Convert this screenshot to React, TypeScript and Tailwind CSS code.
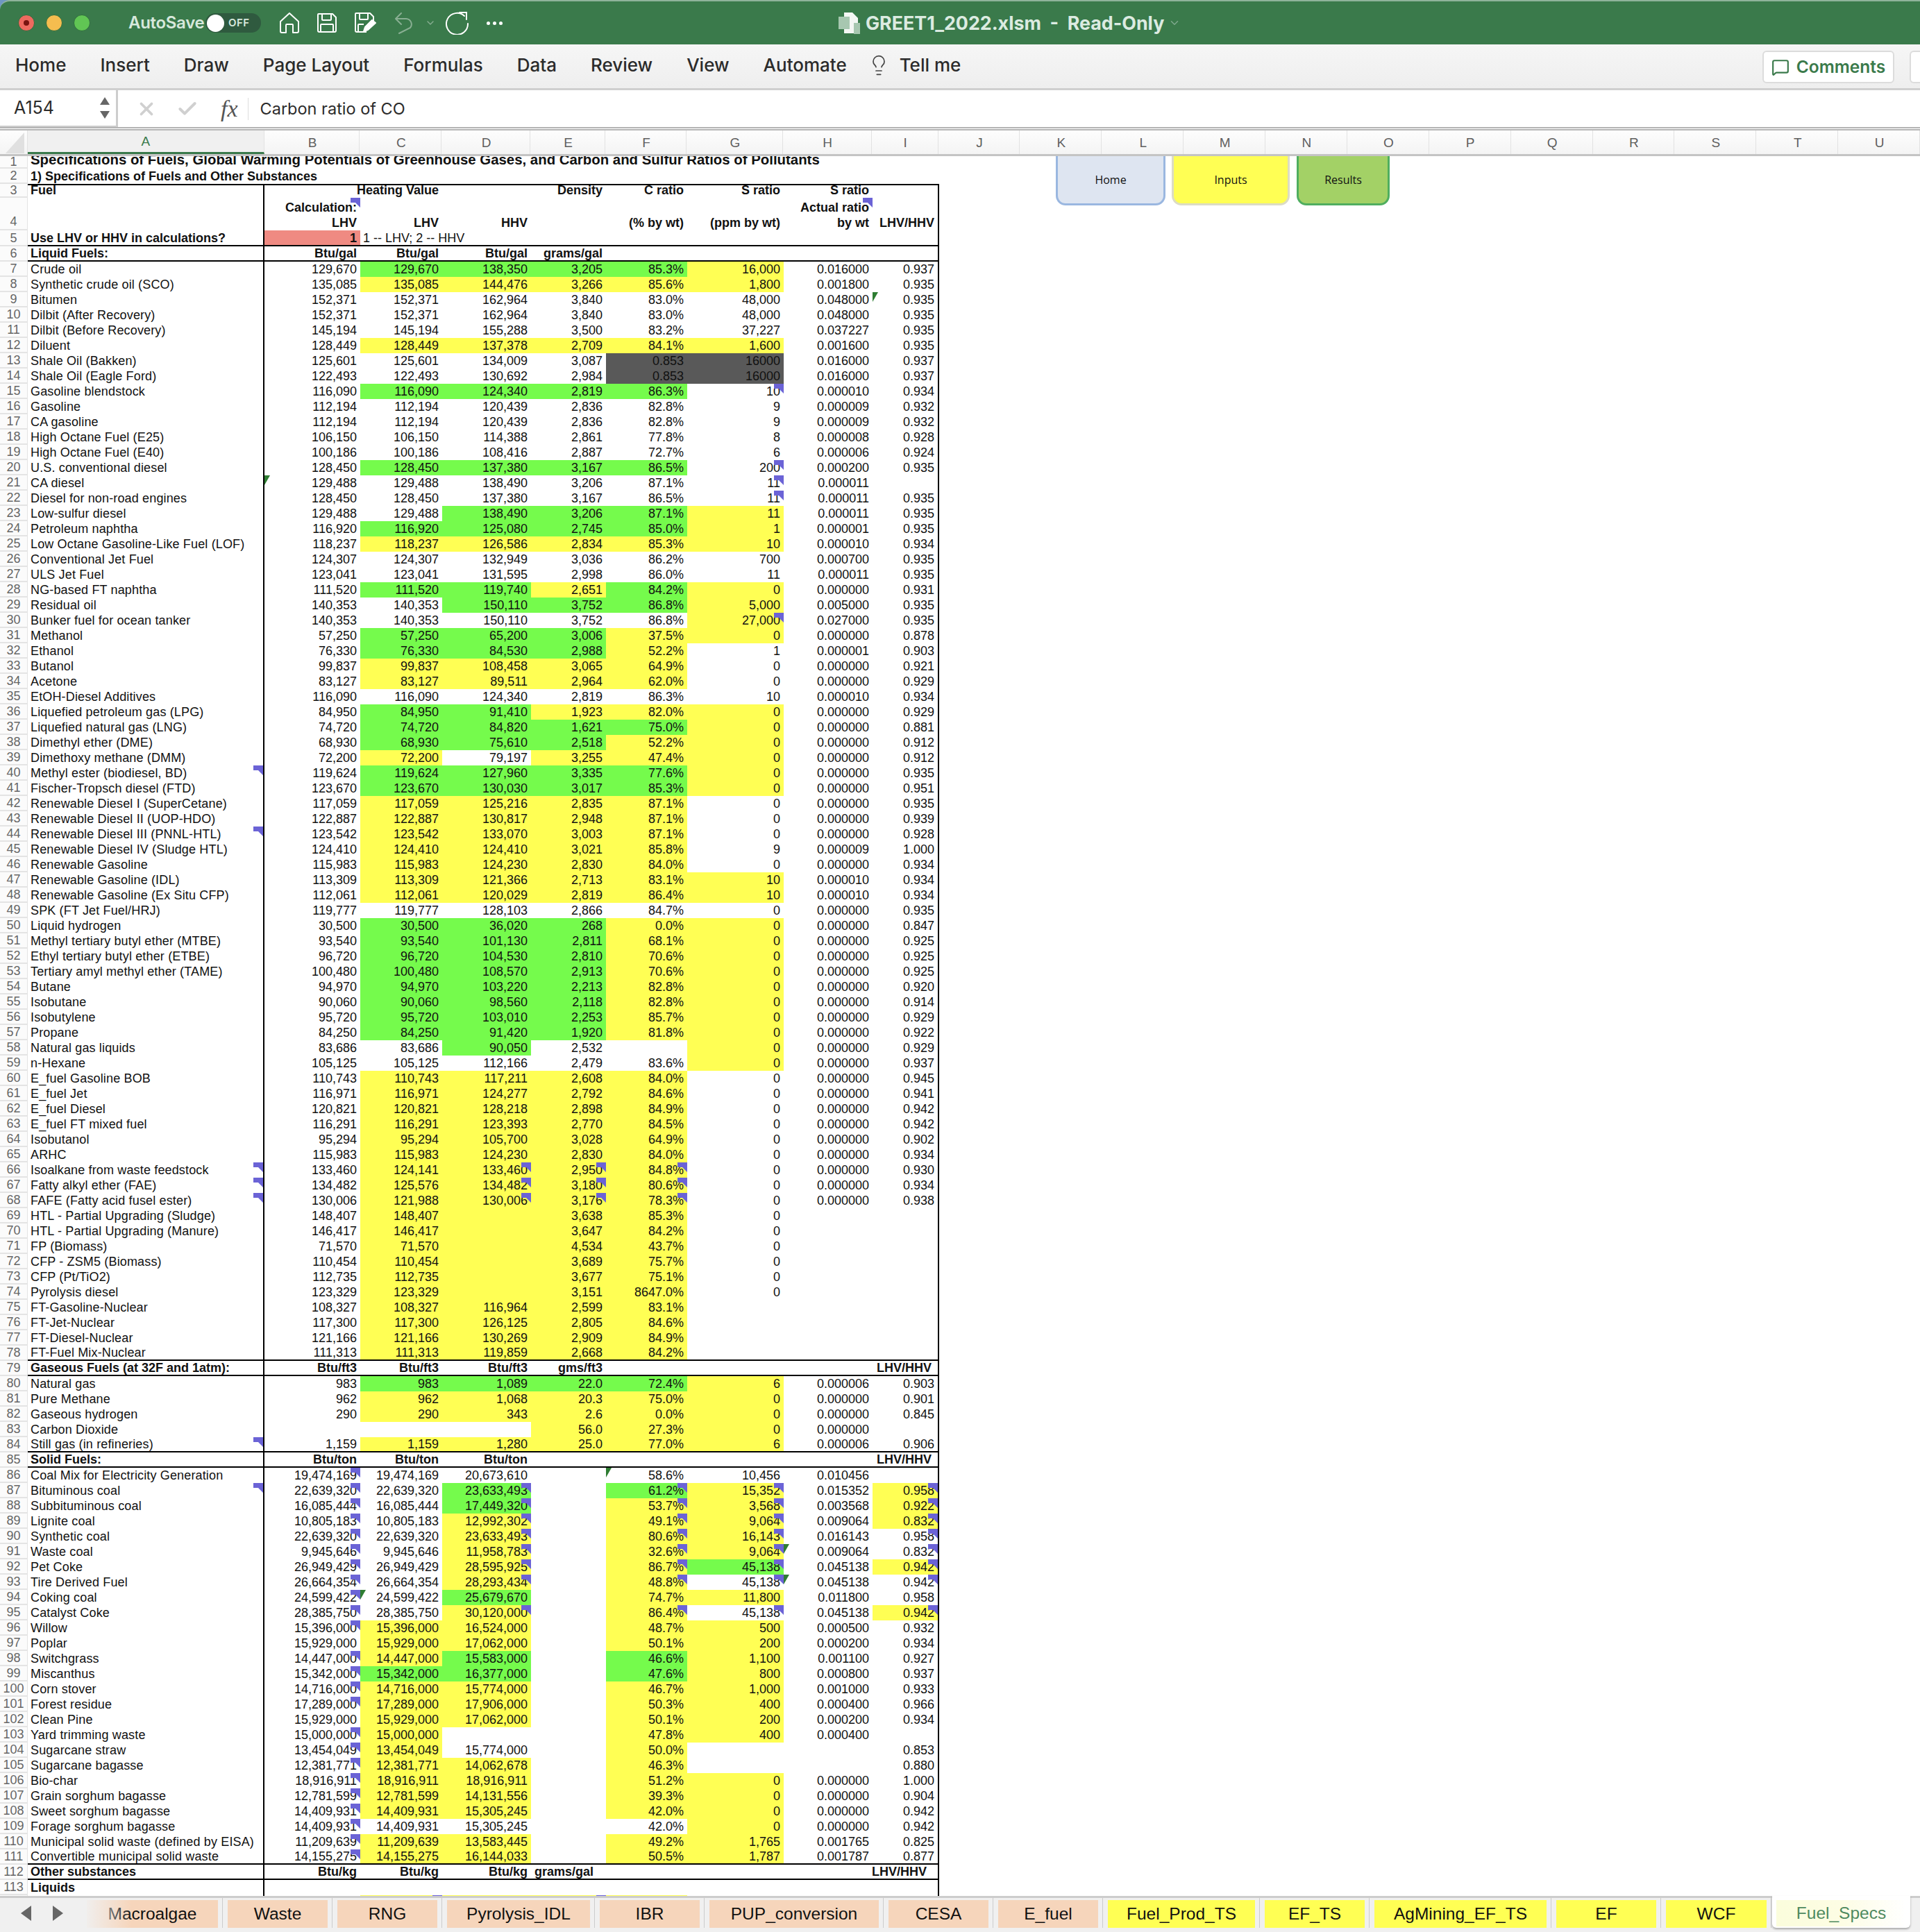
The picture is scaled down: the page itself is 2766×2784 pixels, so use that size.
import { Check, ChevronDown, Lightbulb, MessageSquare, X } from "lucide-react";

const GRID =
  "grid grid-rows-[100%] grid-cols-[40px_341px_138px_118px_128px_108px_117px_139px_128px_96px]";

// label, B C D E F G H I ("_" = empty), fills for C D E F G I, purple comment marks, green marks
type Row = [string, string, string?, string?, string?];

const rows: Row[] = [
  ["Crude oil", "129,670 129,670 138,350 3,205 85.3% 16,000 0.016000 0.937", "ggggy."],
  ["Synthetic crude oil (SCO)", "135,085 135,085 144,476 3,266 85.6% 1,800 0.001800 0.935", "yyyyy."],
  ["Bitumen", "152,371 152,371 162,964 3,840 83.0% 48,000 0.048000 0.935", "", "", "I"],
  ["Dilbit (After Recovery)", "152,371 152,371 162,964 3,840 83.0% 48,000 0.048000 0.935"],
  ["Dilbit (Before Recovery)", "145,194 145,194 155,288 3,500 83.2% 37,227 0.037227 0.935"],
  ["Diluent", "128,449 128,449 137,378 2,709 84.1% 1,600 0.001600 0.935", "yyyyy."],
  ["Shale Oil (Bakken)", "125,601 125,601 134,009 3,087 0.853 16000 0.016000 0.937", "...dd."],
  ["Shale Oil (Eagle Ford)", "122,493 122,493 130,692 2,984 0.853 16000 0.016000 0.937", "...dd."],
  ["Gasoline blendstock", "116,090 116,090 124,340 2,819 86.3% 10 0.000010 0.934", "gggg..", "G"],
  ["Gasoline", "112,194 112,194 120,439 2,836 82.8% 9 0.000009 0.932"],
  ["CA gasoline", "112,194 112,194 120,439 2,836 82.8% 9 0.000009 0.932"],
  ["High Octane Fuel (E25)", "106,150 106,150 114,388 2,861 77.8% 8 0.000008 0.928"],
  ["High Octane Fuel (E40)", "100,186 100,186 108,416 2,887 72.7% 6 0.000006 0.924"],
  ["U.S. conventional diesel", "128,450 128,450 137,380 3,167 86.5% 200 0.000200 0.935", "gggg..", "G"],
  ["CA diesel", "129,488 129,488 138,490 3,206 87.1% 11 0.000011 _", "", "G", "B"],
  ["Diesel for non-road engines", "128,450 128,450 137,380 3,167 86.5% 11 0.000011 0.935", "", "G"],
  ["Low-sulfur diesel", "129,488 129,488 138,490 3,206 87.1% 11 0.000011 0.935", ".gggy."],
  ["Petroleum naphtha", "116,920 116,920 125,080 2,745 85.0% 1 0.000001 0.935", "ggggy."],
  ["Low Octane Gasoline-Like Fuel (LOF)", "118,237 118,237 126,586 2,834 85.3% 10 0.000010 0.934", "yyyyy."],
  ["Conventional Jet Fuel", "124,307 124,307 132,949 3,036 86.2% 700 0.000700 0.935"],
  ["ULS Jet Fuel", "123,041 123,041 131,595 2,998 86.0% 11 0.000011 0.935"],
  ["NG-based FT naphtha", "111,520 111,520 119,740 2,651 84.2% 0 0.000000 0.931", "ggygy."],
  ["Residual oil", "140,353 140,353 150,110 3,752 86.8% 5,000 0.005000 0.935", ".gggy."],
  ["Bunker fuel for ocean tanker", "140,353 140,353 150,110 3,752 86.8% 27,000 0.027000 0.935", "....y.", "G"],
  ["Methanol", "57,250 57,250 65,200 3,006 37.5% 0 0.000000 0.878", "gggyy."],
  ["Ethanol", "76,330 76,330 84,530 2,988 52.2% 1 0.000001 0.903", "gggy.."],
  ["Butanol", "99,837 99,837 108,458 3,065 64.9% 0 0.000000 0.921", "yyyy.."],
  ["Acetone", "83,127 83,127 89,511 2,964 62.0% 0 0.000000 0.929", "yyyy.."],
  ["EtOH-Diesel Additives", "116,090 116,090 124,340 2,819 86.3% 10 0.000010 0.934"],
  ["Liquefied petroleum gas (LPG)", "84,950 84,950 91,410 1,923 82.0% 0 0.000000 0.929", "ggyyy."],
  ["Liquefied natural gas (LNG)", "74,720 74,720 84,820 1,621 75.0% 0 0.000000 0.881", "ggggy."],
  ["Dimethyl ether (DME)", "68,930 68,930 75,610 2,518 52.2% 0 0.000000 0.912", "gggyy."],
  ["Dimethoxy methane (DMM)", "72,200 72,200 79,197 3,255 47.4% 0 0.000000 0.912", "y.yyy."],
  ["Methyl ester (biodiesel, BD)", "119,624 119,624 127,960 3,335 77.6% 0 0.000000 0.935", "ggggy.", "A"],
  ["Fischer-Tropsch diesel (FTD)", "123,670 123,670 130,030 3,017 85.3% 0 0.000000 0.951", "ggggy."],
  ["Renewable Diesel I (SuperCetane)", "117,059 117,059 125,216 2,835 87.1% 0 0.000000 0.935", "yyyy.."],
  ["Renewable Diesel II (UOP-HDO)", "122,887 122,887 130,817 2,948 87.1% 0 0.000000 0.939", "yyyy.."],
  ["Renewable Diesel III (PNNL-HTL)", "123,542 123,542 133,070 3,003 87.1% 0 0.000000 0.928", "yyyy..", "A"],
  ["Renewable Diesel IV (Sludge HTL)", "124,410 124,410 124,410 3,021 85.8% 9 0.000009 1.000", "yyyy.."],
  ["Renewable Gasoline", "115,983 115,983 124,230 2,830 84.0% 0 0.000000 0.934", "yyyy.."],
  ["Renewable Gasoline (IDL)", "113,309 113,309 121,366 2,713 83.1% 10 0.000010 0.934", "yyyyy."],
  ["Renewable Gasoline (Ex Situ CFP)", "112,061 112,061 120,029 2,819 86.4% 10 0.000010 0.934", "yyyyy."],
  ["SPK (FT Jet Fuel/HRJ)", "119,777 119,777 128,103 2,866 84.7% 0 0.000000 0.935"],
  ["Liquid hydrogen", "30,500 30,500 36,020 268 0.0% 0 0.000000 0.847", "gggyy."],
  ["Methyl tertiary butyl ether (MTBE)", "93,540 93,540 101,130 2,811 68.1% 0 0.000000 0.925", "gggyy."],
  ["Ethyl tertiary butyl ether (ETBE)", "96,720 96,720 104,530 2,810 70.6% 0 0.000000 0.925", "gggyy."],
  ["Tertiary amyl methyl ether (TAME)", "100,480 100,480 108,570 2,913 70.6% 0 0.000000 0.925", "gggyy."],
  ["Butane", "94,970 94,970 103,220 2,213 82.8% 0 0.000000 0.920", "gggyy."],
  ["Isobutane", "90,060 90,060 98,560 2,118 82.8% 0 0.000000 0.914", "gggyy."],
  ["Isobutylene", "95,720 95,720 103,010 2,253 85.7% 0 0.000000 0.929", "gggyy."],
  ["Propane", "84,250 84,250 91,420 1,920 81.8% 0 0.000000 0.922", "gggyy."],
  ["Natural gas liquids", "83,686 83,686 90,050 2,532 _ 0 0.000000 0.929", ".g..y."],
  ["n-Hexane", "105,125 105,125 112,166 2,479 83.6% 0 0.000000 0.937", "....y."],
  ["E_fuel Gasoline BOB", "110,743 110,743 117,211 2,608 84.0% 0 0.000000 0.945", "yyyy.."],
  ["E_fuel Jet", "116,971 116,971 124,277 2,792 84.6% 0 0.000000 0.941", "yyyy.."],
  ["E_fuel Diesel", "120,821 120,821 128,218 2,898 84.9% 0 0.000000 0.942", "yyyy.."],
  ["E_fuel FT mixed fuel", "116,291 116,291 123,393 2,770 84.5% 0 0.000000 0.942", "yyyy.."],
  ["Isobutanol", "95,294 95,294 105,700 3,028 64.9% 0 0.000000 0.902", "yyyy.."],
  ["ARHC", "115,983 115,983 124,230 2,830 84.0% 0 0.000000 0.934", "yyyy.."],
  ["Isoalkane from waste feedstock", "133,460 124,141 133,460 2,950 84.8% 0 0.000000 0.930", "yyyy..", "ADEF"],
  ["Fatty alkyl ether (FAE)", "134,482 125,576 134,482 3,180 80.6% 0 0.000000 0.934", "yyyy..", "ADEF"],
  ["FAFE (Fatty acid fusel ester)", "130,006 121,988 130,006 3,176 78.3% 0 0.000000 0.938", "yyyy..", "ADEF"],
  ["HTL - Partial Upgrading (Sludge)", "148,407 148,407 _ 3,638 85.3% 0 _ _", "yyyy.."],
  ["HTL - Partial Upgrading (Manure)", "146,417 146,417 _ 3,647 84.2% 0 _ _", "yyyy.."],
  ["FP (Biomass)", "71,570 71,570 _ 4,534 43.7% 0 _ _", "yyyy.."],
  ["CFP - ZSM5 (Biomass)", "110,454 110,454 _ 3,689 75.7% 0 _ _", "yyyy.."],
  ["CFP (Pt/TiO2)", "112,735 112,735 _ 3,677 75.1% 0 _ _", "yyyy.."],
  ["Pyrolysis diesel", "123,329 123,329 _ 3,151 8647.0% 0 _ _", "yyyy.."],
  ["FT-Gasoline-Nuclear", "108,327 108,327 116,964 2,599 83.1% _ _ _", "yyyy.."],
  ["FT-Jet-Nuclear", "117,300 117,300 126,125 2,805 84.6% _ _ _", "yyyy.."],
  ["FT-Diesel-Nuclear", "121,166 121,166 130,269 2,909 84.9% _ _ _", "yyyy.."],
  ["FT-Fuel Mix-Nuclear", "111,313 111,313 119,859 2,668 84.2% _ _ _", "yyyy.."],
  ["Gaseous Fuels (at 32F and 1atm):", "Btu/ft3 Btu/ft3 Btu/ft3 gms/ft3 _ _ _ LHV/HHV", "H"],
  ["Natural gas", "983 983 1,089 22.0 72.4% 6 0.000006 0.903", "ggggy."],
  ["Pure Methane", "962 962 1,068 20.3 75.0% 0 0.000000 0.901", "yyyyy."],
  ["Gaseous hydrogen", "290 290 343 2.6 0.0% 0 0.000000 0.845", "yyyyy."],
  ["Carbon Dioxide", "_ _ _ 56.0 27.3% 0 0.000000 _", "..yyy."],
  ["Still gas (in refineries)", "1,159 1,159 1,280 25.0 77.0% 6 0.000006 0.906", "yyyyy.", "A"],
  ["Solid Fuels:", "Btu/ton Btu/ton Btu/ton _ _ _ _ LHV/HHV", "H"],
  ["Coal Mix for Electricity Generation", "19,474,169 19,474,169 20,673,610 _ 58.6% 10,456 0.010456 _", "", "B", "F"],
  ["Bituminous coal", "22,639,320 22,639,320 23,633,493 _ 61.2% 15,352 0.015352 0.958", ".g.gyy", "ABDFGI"],
  ["Subbituminous coal", "16,085,444 16,085,444 17,449,320 _ 53.7% 3,568 0.003568 0.922", ".g.yyy", "BDFGI"],
  ["Lignite coal", "10,805,183 10,805,183 12,992,302 _ 49.1% 9,064 0.009064 0.832", ".y.yyy", "BDFGI"],
  ["Synthetic coal", "22,639,320 22,639,320 23,633,493 _ 80.6% 16,143 0.016143 0.958", ".y.yy.", "BDFGI"],
  ["Waste coal", "9,945,646 9,945,646 11,958,783 _ 32.6% 9,064 0.009064 0.832", ".y.yy.", "BDFGI", "H"],
  ["Pet Coke", "26,949,429 26,949,429 28,595,925 _ 86.7% 45,138 0.045138 0.942", ".y.ygy", "BDFGI"],
  ["Tire Derived Fuel", "26,664,354 26,664,354 28,293,434 _ 48.8% 45,138 0.045138 0.942", ".y.y..", "BDFGI", "H"],
  ["Coking coal", "24,599,422 24,599,422 25,679,670 _ 74.7% 11,800 0.011800 0.958", ".g.yy.", "B", "C"],
  ["Catalyst Coke", "28,385,750 28,385,750 30,120,000 _ 86.4% 45,138 0.045138 0.942", ".y.y.y", "BDFGI"],
  ["Willow", "15,396,000 15,396,000 16,524,000 _ 48.7% 500 0.000500 0.932", "yy.yy.", "B"],
  ["Poplar", "15,929,000 15,929,000 17,062,000 _ 50.1% 200 0.000200 0.934", "yy.yy."],
  ["Switchgrass", "14,447,000 14,447,000 15,583,000 _ 46.6% 1,100 0.001100 0.927", "yg.gy.", "B"],
  ["Miscanthus", "15,342,000 15,342,000 16,377,000 _ 47.6% 800 0.000800 0.937", "gg.gy.", "B"],
  ["Corn stover", "14,716,000 14,716,000 15,774,000 _ 46.7% 1,000 0.001000 0.933", "yy.yy.", "B"],
  ["Forest residue", "17,289,000 17,289,000 17,906,000 _ 50.3% 400 0.000400 0.966", "yy.yy.", "B"],
  ["Clean Pine", "15,929,000 15,929,000 17,062,000 _ 50.1% 200 0.000200 0.934", "yy.yy."],
  ["Yard trimming waste", "15,000,000 15,000,000 _ _ 47.8% 400 0.000400 _", "y..yy.", "B"],
  ["Sugarcane straw", "13,454,049 13,454,049 15,774,000 _ 50.0% _ _ 0.853", "y..y..", "B"],
  ["Sugarcane bagasse", "12,381,771 12,381,771 14,062,678 _ 46.3% _ _ 0.880", "yy.y..", "B"],
  ["Bio-char", "18,916,911 18,916,911 18,916,911 _ 51.2% 0 0.000000 1.000", "yy.yy.", "B"],
  ["Grain sorghum bagasse", "12,781,599 12,781,599 14,131,556 _ 39.3% 0 0.000000 0.904", "yy.yy.", "B"],
  ["Sweet sorghum bagasse", "14,409,931 14,409,931 15,305,245 _ 42.0% 0 0.000000 0.942", "yy.yy.", "B"],
  ["Forage sorghum bagasse", "14,409,931 14,409,931 15,305,245 _ 42.0% 0 0.000000 0.942", "....y.", "B"],
  ["Municipal solid waste (defined by EISA)", "11,209,639 11,209,639 13,583,445 _ 49.2% 1,765 0.001765 0.825", "yy.yy.", "B"],
  ["Convertible municipal solid waste", "14,155,275 14,155,275 16,144,033 _ 50.5% 1,787 0.001787 0.877", "yy.yy.", "B"],
];

const columns = ["A", "B", "C", "D", "E", "F", "G", "H", "I", "J", "K", "L", "M", "N", "O", "P", "Q", "R", "S", "T", "U"];
const columnWidths: Record<string, string> = {
  A: "w-[341px]",
  B: "w-[138px]",
  C: "w-[118px]",
  D: "w-[128px]",
  E: "w-[108px]",
  F: "w-[117px]",
  G: "w-[139px]",
  H: "w-[128px]",
  I: "w-[96px]",
};

const sheetTabs = [
  { name: "Macroalgae", size: "w-[189px]", color: "bg-[#f6d5bb]" },
  { name: "Waste", size: "w-[144px]", color: "bg-[#f6d5bb]" },
  { name: "RNG", size: "w-[144px]", color: "bg-[#f6d5bb]" },
  { name: "Pyrolysis_IDL", size: "w-[206px]", color: "bg-[#f6d5bb]" },
  { name: "IBR", size: "w-[144px]", color: "bg-[#f6d5bb]" },
  { name: "PUP_conversion", size: "w-[244px]", color: "bg-[#f6d5bb]" },
  { name: "CESA", size: "w-[144px]", color: "bg-[#f6d5bb]" },
  { name: "E_fuel", size: "w-[144px]", color: "bg-[#f6d5bb]" },
  { name: "Fuel_Prod_TS", size: "w-[212px]", color: "bg-[#ffff54]" },
  { name: "EF_TS", size: "w-[144px]", color: "bg-[#ffff54]" },
  { name: "AgMining_EF_TS", size: "w-[248px]", color: "bg-[#ffff54]" },
  { name: "EF", size: "w-[144px]", color: "bg-[#ffff54]" },
  { name: "WCF", size: "w-[145px]", color: "bg-[#ffff54]" },
];

const fillClass = (f?: string) => {
  if (f === "g") return "bg-[#75fb4c]";
  if (f === "y") return "bg-[#ffff54]";
  if (f === "d") return "bg-[#595959]";
  if (f === "r") return "bg-[#ef8a82]";
  return "";
};

const PurpleMark = () => (
  <span className="absolute right-0 top-0 h-[14px] w-[14px] bg-[#6b63d6] [clip-path:polygon(0_0,100%_0,100%_100%,50%_50%,0_50%)]" />
);

const GreenMark = () => (
  <span className="absolute left-0 top-0 h-[14px] w-[8px] bg-[#2e7d32] [clip-path:polygon(0_0,100%_0,0_100%)]" />
);

type CellProps = {
  children?: React.ReactNode;
  fill?: string;
  purple?: boolean;
  green?: boolean;
  bold?: boolean;
  thick?: boolean;
  pad?: string;
};

const Cell = ({ children, fill, purple, green, bold, thick, pad = "pr-[5px] justify-end" }: CellProps) => (
  <div
    className={`relative flex items-center whitespace-nowrap ${pad} ${fillClass(fill)} ${bold ? "font-bold" : ""} ${
      thick ? "border-b-2 border-black" : ""
    }`}
  >
    {children}
    {purple && <PurpleMark />}
    {green && <GreenMark />}
  </div>
);

const Gutter = ({ n }: { n: number | string }) => (
  <div className="flex items-center justify-center border-b-2 border-r border-[#e4e4e4] bg-[#fbfbfb] font-normal text-[#666666]">
    {n}
  </div>
);

const DataRow = ({ row, n }: { row: Row; n: number }) => {
  const [label, values, fills = "", purple = "", green = ""] = row;
  const isHeader = fills === "H";
  const nextIsHeader = n === 78 || n === 84 || n === 111;
  const thick = isHeader || nextIsHeader;
  const [b, c, d, e, f, g, h, i] = values.split(" ").map((v) => (v === "_" ? "" : v));
  const fillAt = (idx: number) => (isHeader ? "" : fills[idx]);
  const common = (col: string) => ({
    purple: purple.includes(col),
    green: green.includes(col),
    bold: isHeader,
    thick,
  });
  return (
    <div className={`${GRID} h-[22px]`}>
      <Gutter n={n} />
      <div
        className={`relative flex items-center whitespace-nowrap border-r-2 border-black pl-[4px] ${
          isHeader ? "font-bold" : "tracking-[0.15px]"
        } ${thick ? "border-b-2" : ""}`}
      >
        {label}
        {purple.includes("A") && <PurpleMark />}
      </div>
      <Cell {...common("B")}>{b}</Cell>
      <Cell {...common("C")} fill={fillAt(0)}>{c}</Cell>
      <Cell {...common("D")} fill={fillAt(1)}>{d}</Cell>
      <Cell {...common("E")} fill={fillAt(2)}>{e}</Cell>
      <Cell {...common("F")} fill={fillAt(3)}>{f}</Cell>
      <Cell {...common("G")} fill={fillAt(4)}>{g}</Cell>
      <Cell {...common("H")}>{h}</Cell>
      <div
        className={`relative flex items-center justify-end whitespace-nowrap border-r-2 border-black ${
          isHeader ? "pr-[9px] font-bold" : "pr-[5px]"
        } ${fillClass(fillAt(5))} ${thick ? "border-b-2" : ""}`}
      >
        {i}
        {purple.includes("I") && <PurpleMark />}
        {green.includes("I") && <GreenMark />}
      </div>
    </div>
  );
};

const Sheet = () => (
  <div className="relative min-h-0 flex-1 overflow-hidden bg-white font-['Liberation_Sans',Arial,sans-serif] text-[18px] leading-[22px] text-[#111111]">
    {/* row 1 is cut off by the column headers */}
    <div className="flex h-[18px]">
      <div className="flex w-[40px] items-center justify-center border-b-2 border-r border-[#e4e4e4] bg-[#fbfbfb] text-[#666666]">
        1
      </div>
      <div className="flex items-end whitespace-nowrap pb-[2px] pl-[4px] text-[20.4px] font-bold">
        Specifications of Fuels, Global Warming Potentials of Greenhouse Gases, and Carbon and Sulfur Ratios of Pollutants
      </div>
    </div>
    <div className="flex h-[22px]">
      <div className="flex w-[40px] items-center justify-center border-b-2 border-r border-[#e4e4e4] bg-[#fbfbfb] text-[#666666]">
        2
      </div>
      <div className="flex items-center whitespace-nowrap pl-[4px] font-bold">
        1) Specifications of Fuels and Other Substances
      </div>
    </div>

    <div className={`${GRID} h-[20px] font-bold`}>
      <Gutter n={3} />
      <div className="flex items-center border-r-2 border-t-2 border-black pb-[4px] pl-[4px]">Fuel</div>
      <div className="border-t-2 border-black" />
      <div className="flex items-center justify-end whitespace-nowrap border-t-2 border-black pb-[4px] pr-[5px]">Heating Value</div>
      <div className="border-t-2 border-black" />
      <div className="flex items-center justify-end border-t-2 border-black pb-[4px] pr-[5px]">Density</div>
      <div className="flex items-center justify-end border-t-2 border-black pb-[4px] pr-[5px]">C ratio</div>
      <div className="flex items-center justify-end border-t-2 border-black pb-[4px] pr-[5px]">S ratio</div>
      <div className="flex items-center justify-end border-t-2 border-black pb-[4px] pr-[5px]">S ratio</div>
      <div className="border-r-2 border-t-2 border-black" />
    </div>

    <div className={`${GRID} h-[47px] font-bold`}>
      <div className="flex items-end justify-center border-b-2 border-r border-[#e4e4e4] bg-[#fbfbfb] font-normal text-[#666666]">
        4
      </div>
      <div className="border-r-2 border-black" />
      <div className="relative flex flex-col items-end justify-end pr-[5px]">
        <span>Calculation:</span>
        <span>LHV</span>
        <PurpleMark />
      </div>
      <div className="flex items-end justify-end pr-[5px]">LHV</div>
      <div className="flex items-end justify-end pr-[5px]">HHV</div>
      <div />
      <div className="flex items-end justify-end whitespace-nowrap pr-[5px]">(% by wt)</div>
      <div className="flex items-end justify-end whitespace-nowrap pr-[5px]">(ppm by wt)</div>
      <div className="relative flex flex-col items-end justify-end whitespace-nowrap pr-[5px]">
        <span>Actual ratio</span>
        <span>by wt</span>
        <PurpleMark />
      </div>
      <div className="flex items-end justify-end border-r-2 border-black pr-[5px]">LHV/HHV</div>
    </div>

    <div className={`${GRID} h-[23px]`}>
      <Gutter n={5} />
      <div className="flex items-center whitespace-nowrap border-b-2 border-r-2 border-black pl-[4px] font-bold">
        Use LHV or HHV in calculations?
      </div>
      <Cell fill="r" bold thick>1</Cell>
      <div className="col-span-6 flex items-center whitespace-nowrap border-b-2 border-black pl-[4px]">1 -- LHV; 2 -- HHV</div>
      <div className="border-b-2 border-r-2 border-black" />
    </div>

    <div className={`${GRID} h-[22px] font-bold`}>
      <Gutter n={6} />
      <div className="flex items-center border-b-2 border-r-2 border-black pl-[4px]">Liquid Fuels:</div>
      <Cell thick>Btu/gal</Cell>
      <Cell thick>Btu/gal</Cell>
      <Cell thick>Btu/gal</Cell>
      <Cell thick>grams/gal</Cell>
      <Cell thick />
      <Cell thick />
      <Cell thick />
      <div className="border-b-2 border-r-2 border-black" />
    </div>

    {rows.map((row, i) => (
      <DataRow key={i} row={row} n={i + 7} />
    ))}

    <div className={`${GRID} h-[22px] font-bold`}>
      <Gutter n={112} />
      <div className="flex items-center border-b-2 border-r-2 border-black pl-[4px]">Other substances</div>
      <Cell thick>Btu/kg</Cell>
      <Cell thick>Btu/kg</Cell>
      <Cell thick>Btu/kg</Cell>
      <Cell thick pad="pl-[5px]">grams/gal</Cell>
      <Cell thick />
      <Cell thick />
      <Cell thick />
      <div className="flex items-center justify-end border-b-2 border-r-2 border-black pr-[16px]">LHV/HHV</div>
    </div>
    <div className={`${GRID} h-[22px]`}>
      <Gutter n={113} />
      <div className="flex items-center border-r-2 border-black pl-[4px] font-bold">Liquids</div>
      <div className="col-span-7" />
      <div className="border-r-2 border-black" />
    </div>
    <div className={`${GRID} h-[22px]`}>
      <Gutter n={114} />
      <div className="border-r-2 border-black" />
      <Cell />
      <Cell fill="y" purple />
      <Cell fill="y" />
      <Cell fill="y" purple />
      <Cell fill="y" />
      <Cell />
      <Cell />
      <div className="border-r-2 border-black" />
    </div>

    {/* macro buttons float above the grid */}
    <div className="absolute left-[1521px] top-[-14px] flex h-[85px] w-[158px] items-center justify-center rounded-[14px] border-[3px] border-[#9ab7e0] bg-[#dee5f1] pt-[10px] font-['Open_Sans',sans-serif] text-[16px]">
      Home
    </div>
    <div className="absolute left-[1688px] top-[-14px] flex h-[85px] w-[170px] items-center justify-center rounded-[14px] border-[3px] border-[#dcdcc4] bg-[#ffff54] pt-[10px] font-['Open_Sans',sans-serif] text-[16px]">
      Inputs
    </div>
    <div className="absolute left-[1868px] top-[-14px] flex h-[85px] w-[134px] items-center justify-center rounded-[14px] border-[3px] border-[#4fae5f] bg-[#a3d166] pt-[10px] font-['Open_Sans',sans-serif] text-[16px]">
      Results
    </div>
  </div>
);

const TitleBar = () => (
  <div className="shrink-0 bg-[#6f97c4]">
    <div className="flex h-[64px] items-center rounded-tl-[14px] border-t-2 border-[#8fb39b] bg-[#3a7a4b] pl-[26px] font-['Inter',sans-serif] text-[#d7e8dc]">
      <div className="flex items-center gap-[16px]">
        <span className="flex h-[24px] w-[24px] items-center justify-center rounded-full border border-[#2f6b3e] bg-[#ee6a5f]">
          <span className="h-[8px] w-[8px] rounded-full bg-[#7a1410]" />
        </span>
        <span className="h-[24px] w-[24px] rounded-full border border-[#2f6b3e] bg-[#f5bd4f]" />
        <span className="h-[24px] w-[24px] rounded-full border border-[#2f6b3e] bg-[#61c554]" />
      </div>
      <span className="ml-[55px] w-[111px] text-[24px] font-semibold leading-none tracking-[-0.3px]">AutoSave</span>
      <div className="flex h-[28px] w-[80px] items-center rounded-full bg-[#2f5a3f] pl-[2px]">
        <span className="h-[25px] w-[25px] rounded-full bg-white" />
        <span className="ml-[6px] text-[15px] font-semibold tracking-[0.5px]">OFF</span>
      </div>
      <svg className="ml-[26px]" width="30" height="32" viewBox="0 0 30 32" fill="none" stroke="white" strokeWidth="2" strokeLinejoin="round">
        <path d="M2 14 15 2l13 12v14a2 2 0 0 1-2 2h-6V19a1 1 0 0 0-1-1h-8a1 1 0 0 0-1 1v11H4a2 2 0 0 1-2-2z" />
      </svg>
      <svg className="ml-[24px]" width="30" height="30" viewBox="0 0 30 30" fill="none" stroke="white" strokeWidth="2" strokeLinejoin="round">
        <path d="M3 2h20l5 5v19a2 2 0 0 1-2 2H4a2 2 0 0 1-2-2V3a1 1 0 0 1 1-1z" />
        <path d="M8 2v8a1 1 0 0 0 1 1h11a1 1 0 0 0 1-1V2M6 28V18a1 1 0 0 1 1-1h16a1 1 0 0 1 1 1v10" />
      </svg>
      <svg className="ml-[24px]" width="32" height="32" viewBox="0 0 32 32" fill="none" stroke="white" strokeWidth="2" strokeLinejoin="round">
        <path d="M18 29H4a2 2 0 0 1-2-2V3a1 1 0 0 1 1-1h20l5 5v6" />
        <path d="M8 2v8a1 1 0 0 0 1 1h10a1 1 0 0 0 1-1V2M6 29V19a1 1 0 0 1 1-1h7" />
        <path d="m14 28 2-6 10-10 5 4-11 10z" fill="white" />
      </svg>
      <svg className="ml-[26px] opacity-40" width="28" height="32" viewBox="0 0 28 32" fill="none" stroke="white" strokeWidth="2" strokeLinecap="round">
        <path d="M2 10h15a8 8 0 0 1 6 13L7 31M2 10l8-8M2 10l8 8" />
      </svg>
      <ChevronDown className="ml-[16px] h-[16px] w-[16px] text-white opacity-40" strokeWidth={2} />
      <svg className="ml-[14px]" width="34" height="34" viewBox="0 0 34 34" fill="none" stroke="white" strokeWidth="2" strokeLinecap="round">
        <path d="M27 7A15.5 15.5 0 1 0 32 18M20 2h10v10" />
      </svg>
      <div className="ml-[25px] flex gap-[4px]">
        <span className="h-[5px] w-[5px] rounded-full bg-white" />
        <span className="h-[5px] w-[5px] rounded-full bg-white" />
        <span className="h-[5px] w-[5px] rounded-full bg-white" />
      </div>
      <svg className="ml-[484px]" width="32" height="32" viewBox="0 0 32 32">
        <path d="M8 1h12l8 8v20a2 2 0 0 1-2 2H8z" fill="#f4f7f4" />
        <rect x="0" y="7" width="16" height="18" fill="#a7c7b0" />
        <rect x="22" y="16" width="9" height="16" fill="#a7c7b0" />
      </svg>
      <span className="ml-[7px] whitespace-pre text-[26.8px] font-bold leading-none text-[#dcebe1]">
        GREET1_2022.xlsm  -  Read-Only
      </span>
      <ChevronDown className="ml-[6px] h-[18px] w-[18px] text-[#7fa98d]" strokeWidth={2} />
    </div>
  </div>
);

const Ribbon = () => (
  <div className="flex h-[66px] shrink-0 items-center border-b-[3px] border-[#cfcfcf] bg-gradient-to-b from-[#f6f6f6] to-[#eeeeee] pb-[4px] pl-[22px] font-['Inter',sans-serif] text-[26px] font-medium leading-none text-[#2b2b2b]">
    <div className="flex items-center gap-[49px]">
      <span>Home</span>
      <span>Insert</span>
      <span>Draw</span>
      <span>Page Layout</span>
      <span>Formulas</span>
      <span>Data</span>
      <span>Review</span>
      <span>View</span>
      <span>Automate</span>
    </div>
    <Lightbulb className="ml-[30px] h-[34px] w-[32px] text-[#444444]" strokeWidth={1.3} />
    <span className="ml-[14px]">Tell me</span>
    <div className="ml-auto mt-[6px] flex items-center gap-[22px]">
      <div className="flex h-[47px] w-[190px] items-center justify-center gap-[10px] rounded-[6px] border-2 border-[#dcdcdc] bg-white text-[24.5px] font-semibold text-[#3a7a4b]">
        <MessageSquare className="h-[26px] w-[26px]" strokeWidth={2} />
        Comments
      </div>
      <div className="h-[47px] w-[15px] rounded-l-[6px] border-2 border-r-0 border-[#dcdcdc] bg-white" />
    </div>
  </div>
);

const FormulaBar = () => (
  <div className="flex h-[58px] shrink-0 border-b-[5px] border-double border-[#b5b5b5] bg-white font-['Inter',sans-serif] text-[25px] leading-none text-[#2b2b2b]">
    <div className="flex w-[170px] items-center justify-between border-b-2 border-r-[3px] border-[#cdcdcd] pl-[20px] pr-[9px]">
      <span>A154</span>
      <span className="flex flex-col gap-[9px]">
        <span className="h-0 w-0 border-x-[7px] border-b-[11px] border-x-transparent border-b-[#666666]" />
        <span className="h-0 w-0 border-x-[7px] border-t-[11px] border-x-transparent border-t-[#666666]" />
      </span>
    </div>
    <div className="flex flex-1 items-center">
      <X className="ml-[26px] h-[30px] w-[30px] text-[#d0d0d0]" strokeWidth={3} />
      <Check className="ml-[28px] h-[32px] w-[32px] text-[#d0d0d0]" strokeWidth={3} />
      <span className="ml-[32px] font-['Liberation_Serif',serif] text-[34px] italic text-[#555555]">fx</span>
      <span className="ml-[14px] h-[32px] w-px bg-[#dddddd]" />
      <span className="ml-[17px] text-[23.5px]">Carbon ratio of CO</span>
    </div>
  </div>
);

const ColumnHeaders = () => (
  <div className="z-10 flex h-[37px] shrink-0 border-b-[3px] border-[#c4c4c4] bg-gradient-to-b from-[#fdfdfd] to-[#f4f4f4] font-['Liberation_Sans',Arial,sans-serif] text-[19px] leading-none text-[#5f5f5f]">
    <div className="relative w-[40px] border-r border-[#e2e2e2]">
      <span className="absolute bottom-[1px] right-[4px] h-[30px] w-[27px] bg-[#e0e0e0] [clip-path:polygon(100%_0,100%_100%,0_100%)]" />
    </div>
    {columns.map((c) => (
      <div
        key={c}
        className={`flex items-center justify-center border-r border-[#e2e2e2] ${columnWidths[c] ?? "w-[118px]"} ${
          c === "A" ? "border-b-[3px] border-b-[#3a7a4b] bg-[#f0f0f0] text-[#3a7a4b]" : "pl-[2px]"
        }`}
      >
        {c}
      </div>
    ))}
  </div>
);

const SheetTab = ({ name, size, color }: { name: string; size: string; color: string }) => (
  <div className="h-[43px] shrink-0 border-r border-[#cccccc] pl-[7px] pr-[6px]">
    <div className={`mt-[3px] flex h-[40px] items-center justify-center ${size} ${color}`}>{name}</div>
  </div>
);

const TabBar = () => (
  <div className="relative flex h-[52px] shrink-0 border-t-[3px] border-[#cccccc] bg-[#f0f0f0] font-['Liberation_Sans',Arial,sans-serif] text-[24.5px] leading-none text-[#111111]">
    <div className="flex h-[43px] w-[118px] shrink-0 items-center gap-[31px] pl-[30px]">
      <span className="h-0 w-0 border-y-[11px] border-r-[15px] border-y-transparent border-r-[#666666]" />
      <span className="h-0 w-0 border-y-[11px] border-l-[15px] border-y-transparent border-l-[#666666]" />
    </div>
    {sheetTabs.map((t) => (
      <SheetTab key={t.name} name={t.name} size={t.size} color={t.color} />
    ))}
    <div className="ml-[1px] mt-[-3px] flex h-[46px] w-[199px] shrink-0 items-center justify-center rounded-b-[6px] bg-white px-[6px] pb-[2px] pt-[6px] shadow-[0_2px_3px_rgba(0,0,0,0.3)]">
      <div className="flex h-full w-full items-center justify-center bg-gradient-to-r from-[#fbfddc] via-[#fdfde4] to-[#ffffff] text-[#4f8a5f]">
        Fuel_Specs
      </div>
    </div>
    <span className="pointer-events-none absolute left-[120px] top-0 h-[43px] w-[70px] bg-gradient-to-r from-[#f0f0f0] to-transparent" />
  </div>
);

export default function App() {
  return (
    <div className="flex h-[2784px] w-[2766px] flex-col overflow-hidden bg-white">
      <TitleBar />
      <Ribbon />
      <FormulaBar />
      <ColumnHeaders />
      <Sheet />
      <TabBar />
    </div>
  );
}
